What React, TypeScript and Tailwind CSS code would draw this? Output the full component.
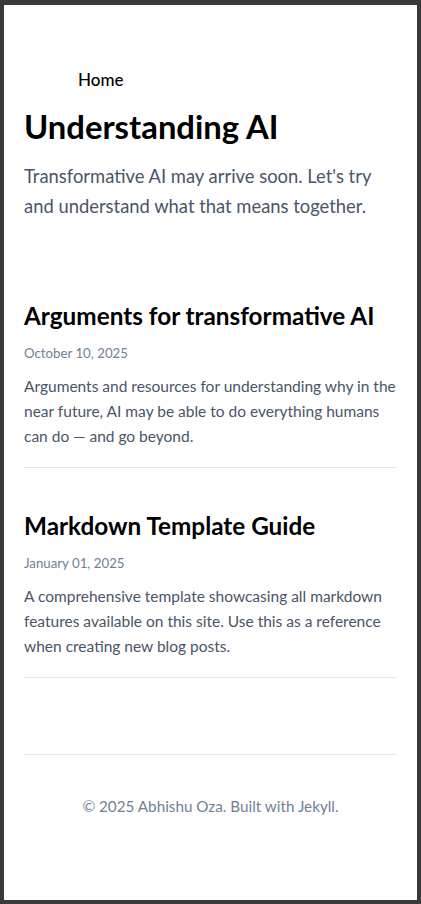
import React from 'react';

const POSTS = [
  {
    title: 'Arguments for transformative AI',
    date: 'October 10, 2025',
    excerpt:
      'Arguments and resources for understanding why in the near future, AI may be able to do everything humans can do — and go beyond.',
  },
  {
    title: 'Markdown Template Guide',
    date: 'January 01, 2025',
    excerpt:
      'A comprehensive template showcasing all markdown features available on this site. Use this as a reference when creating new blog posts.',
  },
];

const App: React.FC = () => {
  return (
    <div className="min-h-screen bg-[#3a3a3a] pt-[5px] px-[4px] pb-[4px] font-['Lato',sans-serif]">
      <div className="bg-white min-h-[895px] px-5 flex flex-col">
        <nav className="mt-[63px] ml-[54px]">
          <a href="#" className="text-[17px] leading-6 font-medium text-black">Home</a>
        </nav>

        <header className="mt-[15px]">
          <h1 className="text-[32.8px] leading-[40px] font-bold text-black">Understanding AI</h1>
          <p className="mt-[14px] text-[18.4px] leading-[30px] text-[#4a5568]">
            Transformative AI may arrive soon. Let's try and understand what that means together.
          </p>
        </header>

        <main className="mt-[79px] flex flex-col">
          {POSTS.map((post, idx) => (
            <article
              key={idx}
              className={`border-b border-[#e5e7eb] pb-[18px] ${idx > 0 ? 'mt-[42px]' : ''}`}
            >
              <h2 className="text-[24.3px] leading-8 font-bold text-black">{post.title}</h2>
              <p className="mt-[11px] text-[13.25px] leading-5 text-[#718096]">{post.date}</p>
              <p className="mt-[11px] text-[15.5px] leading-[25px] text-[#4a5568]">{post.excerpt}</p>
            </article>
          ))}
        </main>

        <footer className="mt-[76px] border-t border-[#e5e7eb] pt-[39px] text-center">
          <p className="text-[15.25px] leading-6 text-[#718096]">© 2025 Abhishu Oza. Built with Jekyll.</p>
        </footer>
      </div>
    </div>
  );
};

export default App;
